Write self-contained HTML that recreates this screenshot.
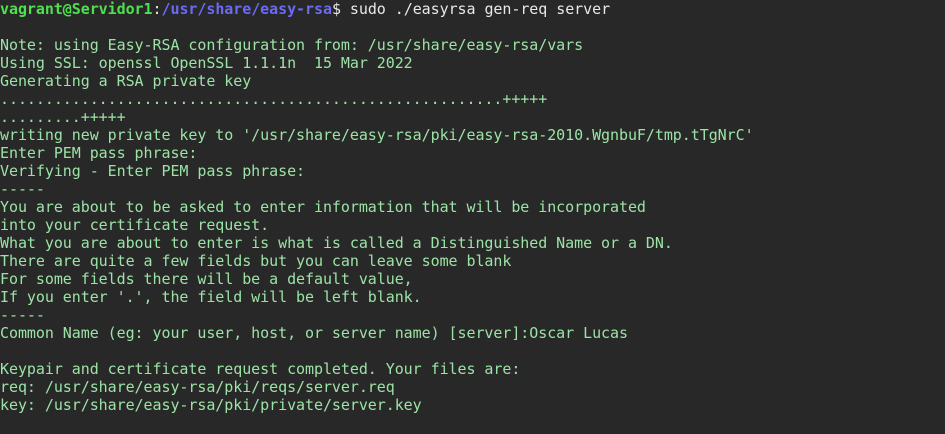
<!DOCTYPE html>
<html><head><meta charset="utf-8"><style>
html,body{margin:0;padding:0;background:#282828;width:945px;height:434px;overflow:hidden}
pre{margin:0;padding:0 0 0 0;font-family:"DejaVu Sans Mono","Liberation Mono",monospace;font-size:15px;line-height:18px;color:#9be3a5;letter-spacing:-0.06px}
.g{color:#4fe04f;font-weight:bold}.b{color:#6a6af5;font-weight:bold}.w{color:#e8e8e8}
</style></head><body><pre><span class="g">vagrant@Servidor1</span><span class="w">:</span><span class="b">/usr/share/easy-rsa</span><span class="w">$ sudo ./easyrsa gen-req server</span>

Note: using Easy-RSA configuration from: /usr/share/easy-rsa/vars
Using SSL: openssl OpenSSL 1.1.1n  15 Mar 2022
Generating a RSA private key
........................................................+++++
.........+++++
writing new private key to '/usr/share/easy-rsa/pki/easy-rsa-2010.WgnbuF/tmp.tTgNrC'
Enter PEM pass phrase:
Verifying - Enter PEM pass phrase:
-----
You are about to be asked to enter information that will be incorporated
into your certificate request.
What you are about to enter is what is called a Distinguished Name or a DN.
There are quite a few fields but you can leave some blank
For some fields there will be a default value,
If you enter '.', the field will be left blank.
-----
Common Name (eg: your user, host, or server name) [server]:Oscar Lucas

Keypair and certificate request completed. Your files are:
req: /usr/share/easy-rsa/pki/reqs/server.req
key: /usr/share/easy-rsa/pki/private/server.key
</pre></body></html>
